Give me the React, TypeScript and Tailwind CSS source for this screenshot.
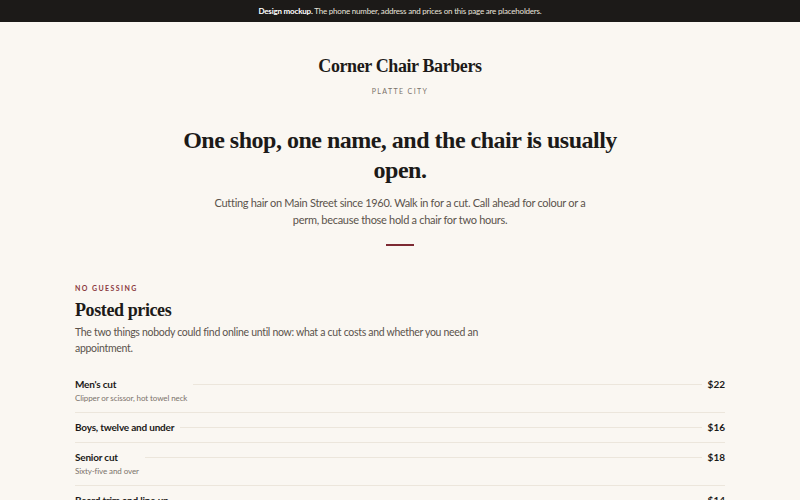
const prices = [
  { name: "Men's cut", note: "Clipper or scissor, hot towel neck", price: "$22" },
  { name: "Boys, twelve and under", note: null, price: "$16" },
  { name: "Senior cut", note: "Sixty-five and over", price: "$18" },
  { name: "Beard trim and line up", note: null, price: "$14" },
];

const serif = "font-['Liberation_Serif',serif]";

export default function App() {
  return (
    <div className="min-h-screen bg-[#faf7f2] font-['Lato',sans-serif] text-[#1c1a18]">
      <div className="flex h-[22px] items-center justify-center bg-[#1c1a18] text-[8px] tracking-[-0.2px] text-[#e9e4dc]">
        <span>
          <b className="font-bold text-white">Design mockup.</b> The phone number, address and prices on this page are placeholders.
        </span>
      </div>

      <header className="flex flex-col items-center pt-[33px]">
        <h2 className={`${serif} text-[18px] font-bold leading-[22px] tracking-[-0.4px]`}>Corner Chair Barbers</h2>
        <p className="mt-[9px] text-[7px] tracking-[0.2em] text-[#7a736b]">PLATTE CITY</p>
      </header>

      <section className="flex flex-col items-center pt-[28px] text-center">
        <h1 className={`${serif} max-w-[480px] text-[24px] font-bold leading-[30px] tracking-[-0.5px]`}>
          One shop, one name, and the chair is usually open.
        </h1>
        <p className="mt-[9px] max-w-[380px] text-[11px] leading-[17px] tracking-[-0.3px] text-[#5b534c]">
          Cutting hair on Main Street since 1960. Walk in for a cut. Call ahead for colour or a perm, because those hold a chair for two hours.
        </p>
        <div className="mt-[16px] h-[2px] w-[28px] bg-[#7d2a33]" />
      </section>

      <section className="px-[75px] pt-[37px]">
        <p className="text-[7px] font-bold tracking-[0.2em] text-[#8a3a40]">NO GUESSING</p>
        <h2 className={`${serif} mt-[5px] text-[18px] font-bold leading-[24px] tracking-[-0.4px]`}>Posted prices</h2>
        <p className="mt-[2px] max-w-[405px] text-[10.5px] leading-[16px] tracking-[-0.3px] text-[#5b534c]">
          The two things nobody could find online until now: what a cut costs and whether you need an appointment.
        </p>

        <ul className="mt-[14px]">
          {prices.map((p) => (
            <li key={p.name} className="flex items-start gap-[6px] border-b border-[#ece6dc] pt-[7px] pb-[8px]">
              <div className="flex flex-col">
                <span className="text-[10px] font-bold leading-[14px] tracking-[-0.2px]">{p.name}</span>
                {p.note && (
                  <span className="mt-[1px] text-[8px] leading-[12px] tracking-[-0.1px] text-[#7a736b]">{p.note}</span>
                )}
              </div>
              <span className="mt-[7px] h-px flex-1 bg-[#ece6dc]" />
              <span className="text-[10px] font-bold leading-[14px]">{p.price}</span>
            </li>
          ))}
        </ul>
      </section>
    </div>
  );
}
